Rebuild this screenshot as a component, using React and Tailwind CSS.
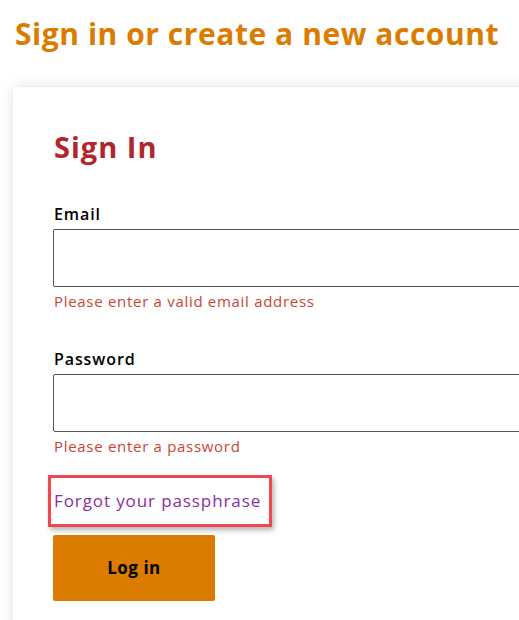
export default function App() {
  const font = { fontFamily: '"Open Sans", "Noto Sans", sans-serif' };
  return (
    <div className="w-[519px] h-[620px] overflow-hidden bg-white" style={font}>
      <h1 className="ml-[15px] pt-[14px] text-[30px] leading-[40px] font-bold text-[#db7c00] tracking-[0.55px]">
        Sign in or create a new account
      </h1>
      <div className="ml-[13px] mt-[33px] w-[600px] h-[560px] bg-white shadow-[0_0_12px_rgba(0,0,0,0.13)] pl-[40px] pt-[40px]">
        <h2 className="ml-[1px] text-[29px] leading-[40px] font-bold text-[#b1262d] tracking-[1px]">Sign In</h2>
        <label className="block mt-[37px] ml-[1px] text-[16px] leading-[20px] font-semibold text-black tracking-[0.9px]">Email</label>
        <div className="mt-[5px] h-[58px] w-[560px] border border-[#555] rounded-[2px]" />
        <p className="mt-[4px] ml-[1px] text-[15px] leading-[20px] text-[#cc4436] tracking-[0.7px]">Please enter a valid email address</p>
        <label className="block mt-[38px] ml-[1px] text-[16px] leading-[20px] font-semibold text-black tracking-[0.9px]">Password</label>
        <div className="mt-[5px] h-[58px] w-[560px] border border-[#555] rounded-[2px]" />
        <p className="mt-[4px] ml-[1px] text-[15px] leading-[20px] text-[#cc4436] tracking-[0.7px]">Please enter a password</p>
        <div className="mt-[19px] -ml-[5px] w-[224px] h-[52px] border-[3px] border-[#f0464f] shadow-[2px_3px_5px_rgba(0,0,0,0.3)] flex items-center">
          <span className="ml-[3px] text-[17px] text-[#8a2ea0] tracking-[0.9px]">Forgot your passphrase</span>
        </div>
        <button className="mt-[8px] w-[162px] h-[66px] bg-[#db7c00] rounded-[2px] text-[17px] font-bold text-black tracking-[0.5px]">
          Log in
        </button>
      </div>
    </div>
  );
}
